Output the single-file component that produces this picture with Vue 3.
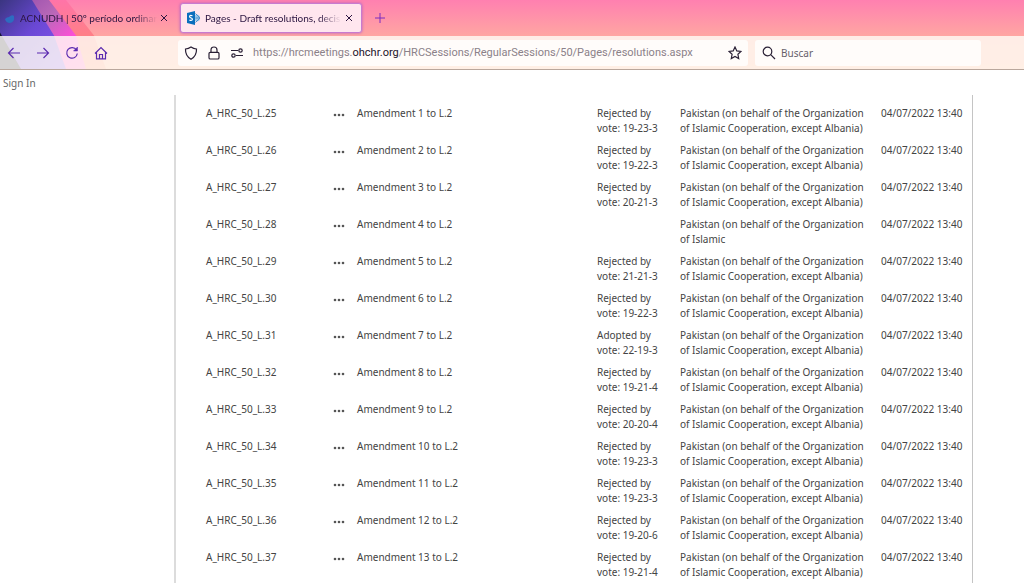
<script setup>
const behalf = 'Pakistan (on behalf of the Organization of Islamic Cooperation, except Albania)'
const votes = [
  'Rejected by vote: 19-23-3',
  'Rejected by vote: 19-22-3',
  'Rejected by vote: 20-21-3',
  '',
  'Rejected by vote: 21-21-3',
  'Rejected by vote: 19-22-3',
  'Adopted by vote: 22-19-3',
  'Rejected by vote: 19-21-4',
  'Rejected by vote: 20-20-4',
  'Rejected by vote: 19-23-3',
  'Rejected by vote: 19-23-3',
  'Rejected by vote: 19-20-6',
  'Rejected by vote: 19-21-4',
]
const rows = votes.map((vote, i) => ({
  name: `A_HRC_50_L.${25 + i}`,
  title: `Amendment ${i + 1} to L.2`,
  vote,
  sponsor: i === 3 ? 'Pakistan (on behalf of the Organization of Islamic' : behalf,
  date: '04/07/2022 13:40',
}))
</script>

<template>
  <div class="window">
    <header class="browser">
      <svg class="theme" viewBox="0 0 160 70" preserveAspectRatio="none" width="160" height="70" aria-hidden="true">
        <defs>
          <linearGradient id="violet" x1="0" y1="0" x2="1" y2="1">
            <stop offset="0" stop-color="#3a3580" />
            <stop offset="0.45" stop-color="#6a48d4" />
            <stop offset="1" stop-color="#8a58f6" />
          </linearGradient>
          <linearGradient id="magenta" x1="0" y1="0" x2="1" y2="1">
            <stop offset="0" stop-color="#9048a8" />
            <stop offset="0.4" stop-color="#b868b8" />
            <stop offset="0.7" stop-color="#ff4fd8" />
            <stop offset="1" stop-color="#ff68c8" />
          </linearGradient>
          <linearGradient id="rose" x1="0" y1="0" x2="0" y2="1">
            <stop offset="0" stop-color="#ff74a8" />
            <stop offset="0.5" stop-color="#ff7f88" />
            <stop offset="1" stop-color="#ff9078" />
          </linearGradient>
        </defs>
        <path d="M48 0 L66 0 L94 36 L106 70 L70 70 Z" fill="url(#rose)" />
        <path d="M0 0 H49 L76 36 L86 70 H0Z" fill="url(#magenta)" />
        <path d="M0 0 H32 L54 36 L66 70 H0Z" fill="url(#violet)" />
        <path d="M0 33 L21 70 H0Z" fill="#17163a" />
      </svg>
      <nav class="tabs" aria-label="Tabs">
        <div class="tab">
          <svg class="favicon" viewBox="0 0 14 14" aria-hidden="true"><path d="M2 8 Q4 6 6 6 Q9 3 11 5 Q12 11 7 12 Q3 12 2 8Z" fill="#2d6cc0" /></svg>
          <a href="#" class="label">ACNUDH | 50º período ordinari</a>
          <button class="close" aria-label="Close tab"><svg viewBox="0 0 8 8"><path d="M1 1 L7 7 M7 1 L1 7" /></svg></button>
        </div>
        <div class="tab active">
          <svg class="favicon" viewBox="0 0 14 14" aria-hidden="true">
            <circle cx="9.5" cy="7" r="3.600" fill="#9cc8ea" />
            <path d="M8.500 2.500 L13 7 L8.500 11.500 M8.500 7 H13" fill="none" stroke="#4a92cc" />
            <path d="M0 2 L8 0 V14 L0 12Z" fill="#0a6ebd" />
            <path d="M5.500 4.800 Q2.500 3.800 2.600 5.600 Q2.800 6.600 4.200 7 Q5.800 7.600 5.200 8.900 Q4.200 9.900 2.400 8.900" fill="none" stroke="#fff" stroke-width="1.200" />
          </svg>
          <a href="#" class="label">Pages - Draft resolutions, decisi</a>
          <button class="close" aria-label="Close tab"><svg viewBox="0 0 8 8"><path d="M1 1 L7 7 M7 1 L1 7" /></svg></button>
        </div>
        <button class="new" aria-label="New tab"><svg viewBox="0 0 12 12"><path d="M6 1 V11 M1 6 H11" /></svg></button>
      </nav>
      <div class="toolbar">
        <div class="nav">
          <button aria-label="Back"><svg viewBox="0 0 14 14"><path d="M13 7 H1.500 M6.500 2 L1.500 7 L6.500 12" /></svg></button>
          <button aria-label="Forward"><svg viewBox="0 0 14 14"><path d="M1 7 H12.500 M7.500 2 L12.500 7 L7.500 12" /></svg></button>
          <button aria-label="Reload"><svg viewBox="0 0 14 14"><path d="M11.500 4 A5.300 5.300 0 1 0 12.300 7.500" /><path d="M12.500 1 V5 H8.500Z" fill="currentColor" stroke-width="0.500" /></svg></button>
          <button aria-label="Home"><svg viewBox="0 0 14 14"><path d="M1 7.500 L7 1.500 L13 7.500 M2.500 6.500 V12.800 H11.500 V6.500 M5.500 12.500 V8.500 H8.500 V12.500" /></svg></button>
        </div>
        <div class="address">
          <svg viewBox="0 0 14 14" aria-hidden="true"><path d="M7 1 Q9.500 2.800 12.500 3 Q12.800 10 7 13.200 Q1.200 10 1.500 3 Q4.500 2.800 7 1Z" /></svg>
          <svg viewBox="0 0 14 14" aria-hidden="true"><rect x="2" y="6.300" width="10" height="6.700" rx="1.300" /><path d="M4 6.300 V4 Q4 1 7 1 Q10 1 10 4 V6.300" /></svg>
          <svg viewBox="0 0 14 14" aria-hidden="true"><path d="M1 4.500 H8 M6 9.500 H13" /><circle cx="10.500" cy="4.500" r="1.700" /><circle cx="3.500" cy="9.500" r="1.700" /></svg>
          <a href="#" class="url">https://hrcmeetings.<b>ohchr.org</b>/HRCSessions/RegularSessions/50/Pages/resolutions.aspx</a>
          <button aria-label="Bookmark"><svg viewBox="0 0 14 14"><path d="M7 1 L8.800 4.900 L13 5.400 L9.900 8.300 L10.700 12.500 L7 10.400 L3.300 12.500 L4.100 8.300 L1 5.400 L5.200 4.900Z" /></svg></button>
        </div>
        <label class="search">
          <svg viewBox="0 0 14 14" aria-hidden="true"><circle cx="5.500" cy="5.500" r="4.300" /><path d="M8.700 8.700 L13 13" /></svg>
          <input type="text" placeholder="Buscar" aria-label="Buscar" />
        </label>
      </div>
    </header>
    <a href="#" class="signin">Sign In</a>
    <main class="content">
      <table>
        <colgroup><col class="c-name" /><col class="c-menu" /><col /><col class="c-vote" /><col class="c-sponsor" /><col class="c-date" /></colgroup>
        <tbody>
          <tr v-for="row in rows" :key="row.name">
            <td><a href="#">{{ row.name }}</a></td>
            <td><button class="more" :aria-label="'Open menu for ' + row.name"><svg viewBox="0 0 12 4"><circle cx="2" cy="2" r="1.300" /><circle cx="6" cy="2" r="1.300" /><circle cx="10" cy="2" r="1.300" /></svg></button></td>
            <td>{{ row.title }}</td>
            <td>{{ row.vote }}</td>
            <td>{{ row.sponsor }}</td>
            <td>{{ row.date }}</td>
          </tr>
        </tbody>
      </table>
    </main>
  </div>
</template>

<style>
body { margin: 0; background: #fff; }
</style>

<style scoped>
* { box-sizing: border-box; }
.window { display: flex; flex-direction: column; height: 100vh; font-family: "Noto Sans", "Open Sans", sans-serif; font-size: 10px; }
a { color: inherit; text-decoration: none; }
button { display: flex; padding: 0; border: 0; background: none; color: inherit; }
svg { flex: none; fill: none; stroke: currentColor; }
.browser { position: relative; flex: none; background: linear-gradient(#ff80b0, #ffa6a2 36px, #ffb09c); border-bottom: 1px solid #b9a79c; }
.theme { position: absolute; left: 0; top: 0; height: 100%; stroke: none; }
.tabs { position: relative; display: flex; align-items: center; height: 36px; color: #2b1540; font-family: Lato, "Noto Sans", sans-serif; }
.tab { display: flex; align-items: center; width: 180px; height: 30px; padding: 0 12px 0 3px; gap: 3px; }
.tab.active { width: 182px; padding: 0 8px 0 6px; gap: 4px; background: #ffe6ee; border: 1px solid #c77bd0; border-radius: 3px; box-shadow: 0 0 3px #b060c0; }
.favicon { width: 14px; height: 14px; stroke: none; }
.label { flex: 1; overflow: hidden; white-space: nowrap; mask-image: linear-gradient(90deg, #000 84%, transparent); }
.close svg { width: 8px; height: 8px; }
.new { margin-left: 12px; color: #7a2cc0; }
.new svg { width: 12px; height: 12px; }
.toolbar { position: relative; display: flex; align-items: center; height: 33px; padding-right: 43px; background: rgba(255, 252, 245, 0.82); }
.nav { display: flex; gap: 15px; width: 178px; padding-left: 7px; color: #5b2bb0; }
.toolbar svg { width: 14px; height: 14px; stroke-width: 1.200; }
.address { flex: 1; display: flex; align-items: center; height: 26px; gap: 9px; padding: 0 6px 0 6px; color: #2a2035; background: #fffcfa; border-radius: 3px; }
.url { flex: 1; overflow: hidden; white-space: nowrap; color: #8b8189; font-family: Roboto, "Noto Sans", sans-serif; font-size: 11px; }
.url b { font-weight: 400; color: #1c1228; }
.search { display: flex; align-items: center; gap: 5px; width: 226px; height: 26px; margin-left: 7px; padding-left: 7px; color: #2a2035; background: #fffcfa; border-radius: 3px; }
.search input { flex: 1; min-width: 0; padding: 0; border: 0; outline: 0; background: none; font: inherit; }
.search input::placeholder { color: #66606a; }
.signin { flex: none; height: 25px; padding-left: 3px; line-height: 26px; color: #666; }
.content { flex: 1; min-height: 0; overflow: hidden; margin: 0 51px 0 174px; padding: 11px 0 0 30px; border-left: 2px solid #dcdcdc; border-right: 1px solid #c4c4c4; color: #444; }
table { width: 100%; table-layout: fixed; border-collapse: collapse; }
td { height: 37px; padding: 0; line-height: 15px; vertical-align: top; }
.c-name { width: 127px; }
.c-menu { width: 24px; }
.c-vote { width: 83px; }
.c-sponsor { width: 201px; }
.c-date { width: 91px; }
td:nth-child(4) { padding-right: 15px; }
td:nth-child(5) { padding-right: 10px; }
.more { height: 18px; align-items: center; color: #555; }
.more svg { width: 12px; height: 4px; fill: currentColor; stroke: none; }
</style>
